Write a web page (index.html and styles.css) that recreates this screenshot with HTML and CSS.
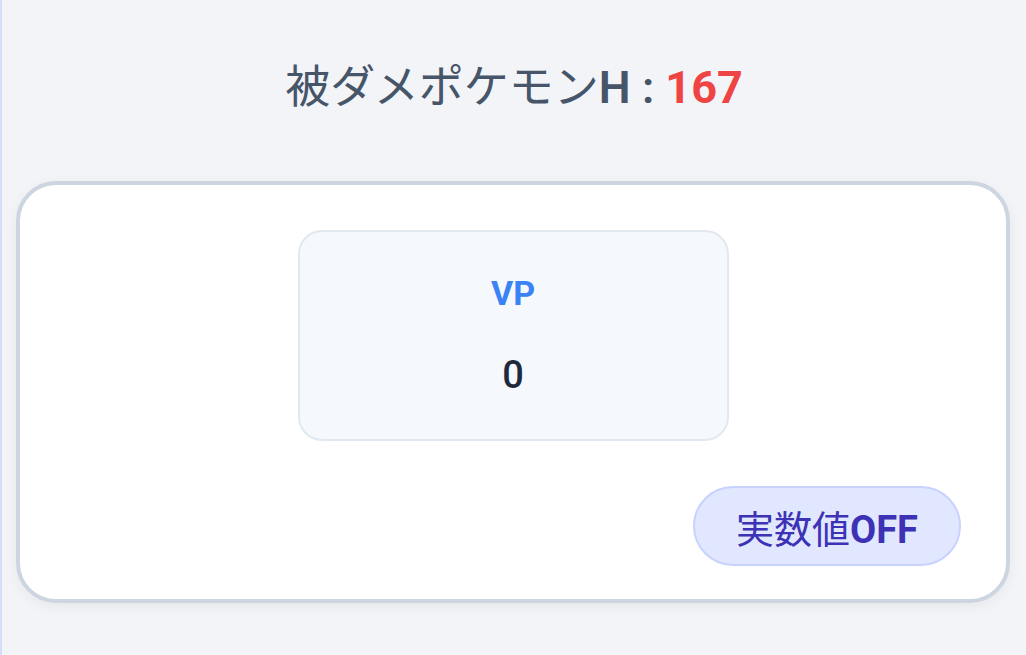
FILE: index.html
```html
<!DOCTYPE html>
<html lang="ja">

<head>
    <meta charset="UTF-8">
    <meta name="viewport" content="width=device-width, initial-scale=1.0">
    <title>VP</title>
    <link rel="stylesheet" href="styles.css">
</head>

<body>
    <div class="page">
        <h1 class="title">
            <span class="title-label">被ダメポケモン</span><span class="title-key">H : </span><span class="title-value">167</span>
        </h1>

        <div class="card">
            <!-- VP display -->
            <div class="stat-box">
                <div class="stat-name">VP</div>
                <div class="stat-value">0</div>
            </div>

            <div class="actions">
                <button type="button" class="toggle-btn" id="realValueBtn"><span class="toggle-jp">実数値</span><span class="toggle-state">OFF</span></button>
            </div>
        </div>
    </div>
</body>

</html>
```

FILE: styles.css
```css
body {
    margin: 0;
    background-color: #f3f4f8;
    font-family: Roboto, "Noto Sans CJK JP", sans-serif;
}

.page {
    height: 655px;
    box-sizing: border-box;
    padding: 0 16px;
    border-left: 2px solid #d6ddfb;
}

.title {
    margin: 0;
    padding-top: 58px;
    height: 181px;
    box-sizing: border-box;
    text-align: center;
    font-size: 45px;
    line-height: 60px;
    color: #475569;
}

.title-label {
    font-weight: 400;
}

.title-key {
    font-weight: 600;
}

.title-value {
    font-weight: 700;
    color: #ef4444;
}

.card {
    background-color: #fff;
    border: 4px solid #cdd6e0;
    border-radius: 40px;
    padding: 45px 45px 33px;
    box-shadow: 0px 4px 14px rgba(0, 0, 0, 0.05);
    margin-left: -2px;
}

.stat-box {
    width: 431px;
    height: 211px;
    box-sizing: border-box;
    margin: 0 auto;
    padding-top: 39px;
    background-color: #f5f8fc;
    border: 2px solid #e2e8f0;
    border-radius: 24px;
    text-align: center;
}

.stat-name {
    font-size: 34px;
    line-height: 44px;
    font-weight: 700;
    color: #3b82f6;
}

.stat-value {
    margin-top: 38px;
    font-size: 38px;
    line-height: 44px;
    font-weight: 500;
    color: #1e293b;
}

.actions {
    display: flex;
    justify-content: flex-end;
    margin-top: 45px;
}

.toggle-btn {
    width: 268px;
    height: 80px;
    background-color: #e0e7ff;
    border: 2px solid #c7d2fe;
    border-radius: 40px;
    color: #3d32b5;
    font-family: Roboto, "Noto Sans CJK JP", sans-serif;
    font-size: 38px;
    cursor: pointer;
    padding: 0;
}

.toggle-jp {
    font-weight: 400;
}

.toggle-state {
    font-weight: 700;
}
```
